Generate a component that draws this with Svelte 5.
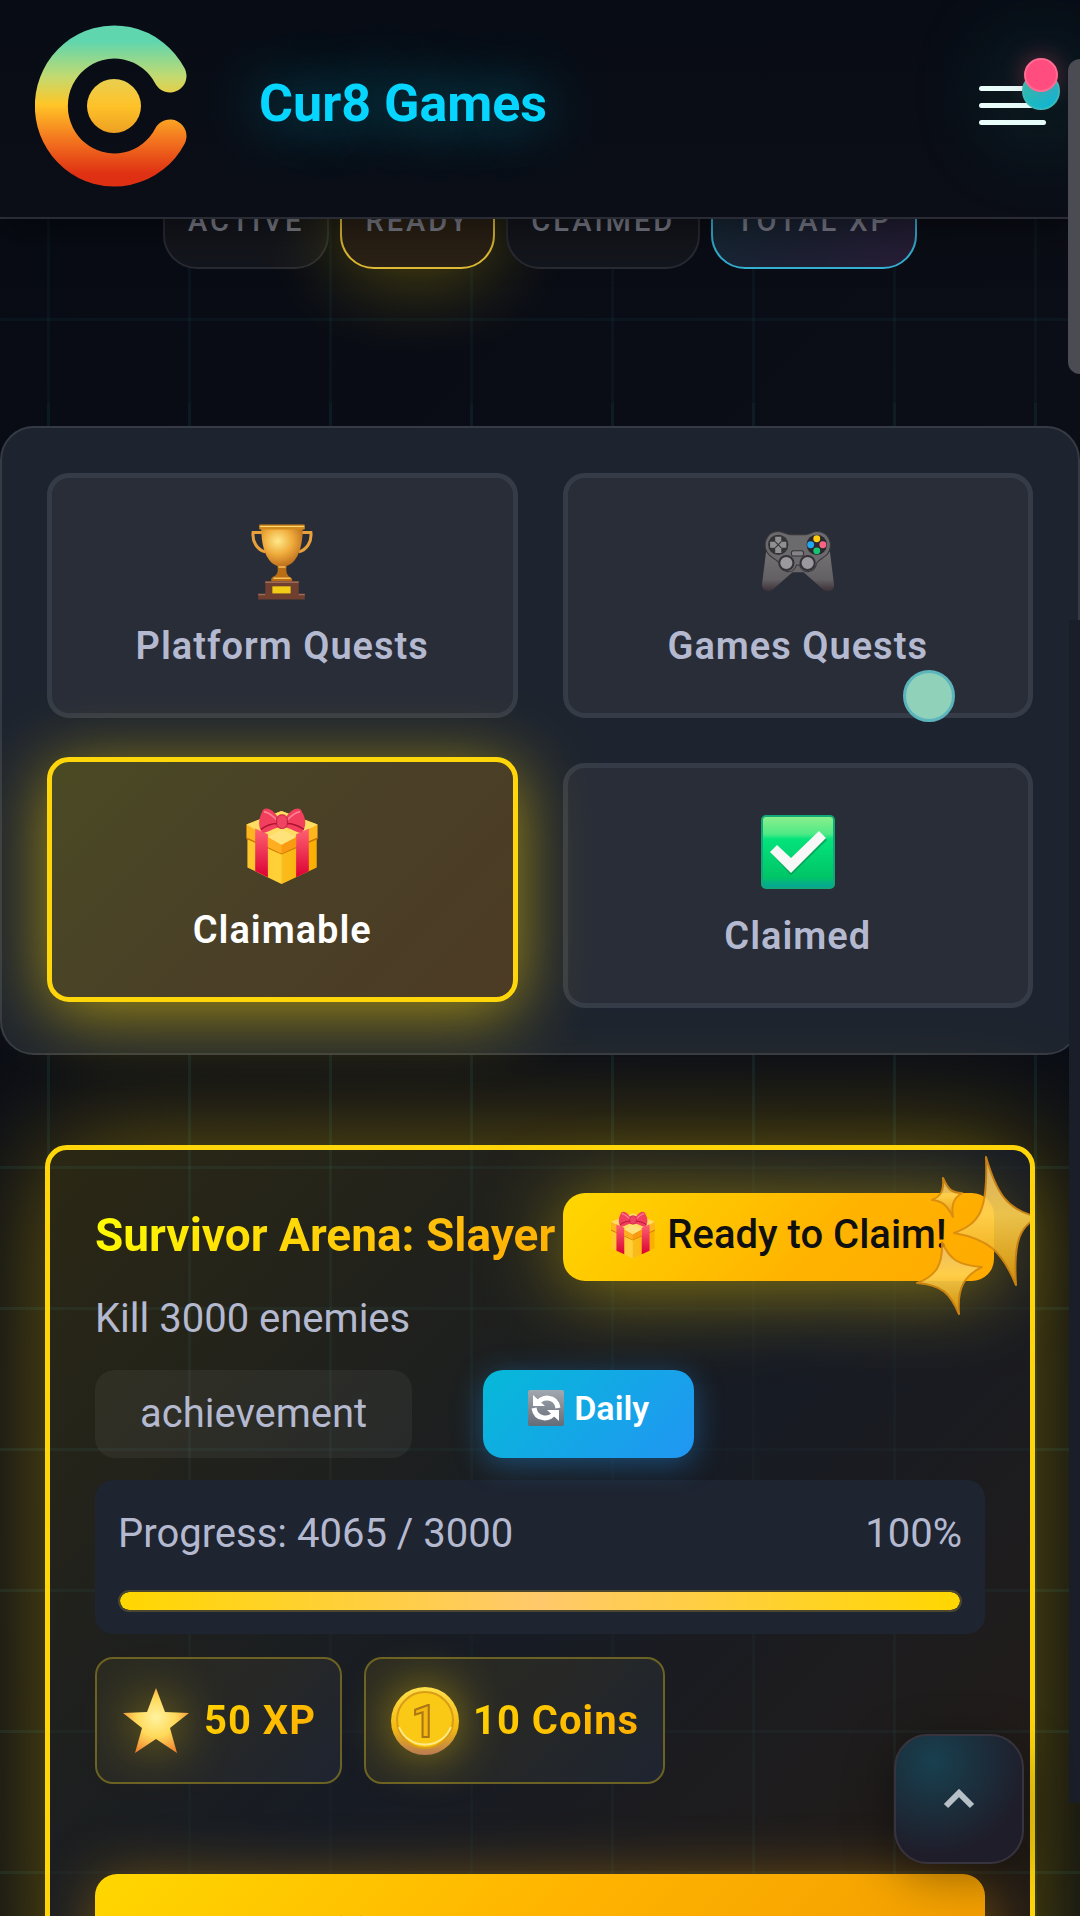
<script lang="ts">
    type Tab = { id: string; label: string };

    const stats = [
        { label: 'Active', kind: 'plain' },
        { label: 'Ready', kind: 'ready' },
        { label: 'Claimed', kind: 'plain' },
        { label: 'Total XP', kind: 'xp' }
    ];

    const tabs: Tab[] = [
        { id: 'platform', label: 'Platform Quests' },
        { id: 'games', label: 'Games Quests' },
        { id: 'claimable', label: 'Claimable' },
        { id: 'claimed', label: 'Claimed' }
    ];

    const quest = {
        title: 'Survivor Arena: Slayer',
        description: 'Kill 3000 enemies',
        category: 'achievement',
        progress: 4065,
        target: 3000,
        xp: 50,
        coins: 10
    };

    let activeTab = $state('claimable');
    let percent = $derived(Math.min(100, Math.round((quest.progress / quest.target) * 100)));
</script>

{#snippet gift()}
    <svg class="gift" viewBox="0 0 73 78" aria-hidden="true">
        <path d="M1 29 L36 46 L72 29 V61 L36 78 L1 61Z" fill="url(#gold-side)" />
        <path d="M36 40 L72 27 V61 L36 78Z" fill="#f5a800" opacity="0.5" />
        <path d="M0 17 L36 3 L73 17 V31 L36 47 L0 31Z" fill="#ffb51c" />
        <path d="M0 17 L36 3 L73 17 L36 37Z" fill="#ffdc63" />
        <path d="M0 31 L36 47 L73 31" fill="none" stroke="#c97800" stroke-width="1.5" />
        <path d="M9 21 L22 27 V71 L9 65Z M64 21 L51 27 V71 L64 65Z" fill="url(#ribbon)" />
        <path d="M22 30 L36 22 L51 30 L36 38Z" fill="#ffe27a" />
        <path d="M22 30 L36 38 V47 L22 40Z" fill="#ffae22" />
        <path d="M51 30 L36 38 V47 L51 40Z" fill="#f99a12" />
        <path d="M32 9 C26 0 18 -2 16 4 C12 12 12 20 16 25 C20 27 26 21 33 20Z" fill="#f23f5d" />
        <path d="M41 9 C47 0 55 -2 57 4 C62 12 61 20 57 25 C53 27 47 21 40 20Z" fill="#f23f5d" />
        <path d="M18 4 C22 4 27 8 32 13 M55 4 C51 4 46 8 41 13" fill="none" stroke="#ff8094" stroke-width="2" />
        <path d="M15 22 C20 18 26 16 32 16 M59 22 C53 18 47 16 41 16" fill="none" stroke="#ad1234" stroke-width="1.5" />
        <rect x="31" y="7" width="11" height="14" rx="5" fill="#ef4563" stroke="#b91c3f" />
    </svg>
{/snippet}

{#snippet tabIcon(id: string)}
    {#if id === 'platform'}
        <svg viewBox="-6 0 73 74" aria-hidden="true">
            <path d="M12 8 H2 C1 17 6 25 14 27 M49 8 H59 C60 17 55 25 47 27" fill="none" stroke="#e9a13b" stroke-width="3" />
            <path d="M10 3 H51 C51 24 45 38 35 41 H26 C16 38 10 24 10 3Z" fill="url(#cup)" />
            <rect x="8" y="0" width="45" height="5" rx="1" fill="#d18a1d" />
            <path d="M9 2 H52" stroke="#ffd772" stroke-width="1" />
            <path d="M26 41 H35 C34 48 36 51 40 53 C42 56 39 57 36 57 H24 C19 57 19 54 21 52 C26 50 27 47 26 41Z" fill="#b96d15" />
            <path d="M27 42 H34 M22 53 H39" stroke="#f9c057" stroke-width="1.5" />
            <path d="M14 56 H47 V69 H53 V74 H7 V69 H14Z" fill="#6f3f30" />
            <path d="M14 57 H47 M7 69 H14 M47 69 H53" stroke="#a16a52" stroke-width="1.5" />
            <rect x="21" y="61" width="18" height="7" fill="#f2cc16" />
        </svg>
    {:else if id === 'games'}
        <svg viewBox="0 -7 73 74" aria-hidden="true">
            <path d="M5 20 L1 52 C1 58 7 61 12 57 L31 40 H42 L61 57 C66 61 73 58 72 52 L68 20Z" fill="url(#pad-grip)" />
            <path d="M17 0 C22 0 25 3 29 3 H44 C48 3 51 0 55 0 C68 0 72 14 65 23 C60 27 58 27 55 31 C53 42 40 42 38 33 H35 C32 42 20 42 18 31 C15 27 12 27 8 23 C0 14 5 0 17 0Z" fill="#6b6a6c" stroke="#38373b" />
            <circle cx="17" cy="13" r="10" fill="#343338" />
            <path d="M14 5 H20 V10 H25 V16 H20 V21 H14 V16 H9 V10 H14Z" fill="#909092" />
            <path d="M14 10 L20 16 M20 10 L14 16" stroke="#343338" />
            <circle cx="55" cy="13" r="10" fill="#29282d" />
            <circle cx="55" cy="7" r="3.4" fill="#ffcc12" />
            <circle cx="49" cy="13" r="3.4" fill="#20a7ef" />
            <circle cx="61" cy="13" r="3.4" fill="#fa6483" />
            <circle cx="55" cy="19" r="3.4" fill="#15c574" />
            <rect x="30" y="19" width="12" height="5" rx="2" fill="#858386" stroke="#343338" />
            <circle cx="25" cy="31" r="7" fill="#9b989e" stroke="#343238" stroke-width="2" />
            <circle cx="46" cy="31" r="7" fill="#9b989e" stroke="#343238" stroke-width="2" />
        </svg>
    {:else if id === 'claimable'}
        {@render gift()}
    {:else}
        <svg viewBox="0 0 74 74" aria-hidden="true">
            <rect x="1" y="1" width="72" height="72" rx="4" fill="url(#check-bg)" stroke="#11a978" stroke-width="2" />
            <path d="M10 38 L16 31 L30 44 L58 17 L66 25 L30 60Z" fill="#08733e" opacity="0.5" />
            <path d="M9 37 L16 30 L30 43 L58 16 L65 23 L30 58Z" fill="#f7f7f7" />
        </svg>
    {/if}
{/snippet}

<svg class="defs" width="0" height="0" aria-hidden="true">
    <defs>
        <linearGradient id="logo-fill" x1="0" y1="0" x2="0" y2="162" gradientUnits="userSpaceOnUse">
            <stop offset="0.1" stop-color="#5fd6ae" />
            <stop offset="0.32" stop-color="#c3da70" />
            <stop offset="0.49" stop-color="#ffc627" />
            <stop offset="0.7" stop-color="#f4781f" />
            <stop offset="0.92" stop-color="#df3013" />
        </linearGradient>
        <linearGradient id="logo-dot" x1="0" y1="0" x2="0" y2="1">
            <stop offset="0" stop-color="#e8cf50" />
            <stop offset="0.5" stop-color="#ffc229" />
            <stop offset="1" stop-color="#eda022" />
        </linearGradient>
        <linearGradient id="gold-side">
            <stop offset="0" stop-color="#ffc62a" />
            <stop offset="0.5" stop-color="#ffd23a" />
            <stop offset="1" stop-color="#ffb500" />
        </linearGradient>
        <linearGradient id="ribbon" x1="0" y1="0" x2="0" y2="1">
            <stop offset="0" stop-color="#ff6372" />
            <stop offset="1" stop-color="#db0034" />
        </linearGradient>
        <radialGradient id="cup" cx="0.4" cy="0.35" r="0.7">
            <stop offset="0" stop-color="#ffe98a" />
            <stop offset="0.5" stop-color="#efab3b" />
            <stop offset="1" stop-color="#b9691a" />
        </radialGradient>
        <linearGradient id="pad-grip" x1="0" y1="0" x2="0" y2="1">
            <stop offset="0" stop-color="#737174" />
            <stop offset="0.7" stop-color="#636064" />
            <stop offset="1" stop-color="#3c3137" />
        </linearGradient>
        <linearGradient id="check-bg" x1="0" y1="0" x2="0" y2="1">
            <stop offset="0" stop-color="#8cf08d" />
            <stop offset="0.25" stop-color="#4fea86" />
            <stop offset="0.32" stop-color="#04e37c" />
            <stop offset="0.85" stop-color="#00c566" />
            <stop offset="1" stop-color="#07a29d" />
        </linearGradient>
        <radialGradient id="star-fill" cx="0.5" cy="0.45" r="0.6">
            <stop offset="0" stop-color="#fff3a0" />
            <stop offset="0.5" stop-color="#ffd95a" />
            <stop offset="1" stop-color="#f2812e" />
        </radialGradient>
        <linearGradient id="coin-fill" x1="0" y1="0" x2="0" y2="1">
            <stop offset="0" stop-color="#ffe04a" />
            <stop offset="0.6" stop-color="#f5bb10" />
            <stop offset="1" stop-color="#b97a52" />
        </linearGradient>
        <linearGradient id="spark-fill" x1="0" y1="0" x2="0" y2="1">
            <stop offset="0" stop-color="#e9bd70" />
            <stop offset="0.45" stop-color="#ffd250" />
            <stop offset="1" stop-color="#e59c06" />
        </linearGradient>
        <linearGradient id="sync-bg" x1="0" y1="0" x2="0" y2="1">
            <stop offset="0" stop-color="#a3a8b0" />
            <stop offset="1" stop-color="#646c78" />
        </linearGradient>
    </defs>
</svg>

<div class="page">
    <header class="topbar">
        <svg class="logo" viewBox="0 0 152 162" role="img" aria-label="Cur8 logo">
            <path d="M135 51 A63 64 0 1 0 135 111" fill="none" stroke="url(#logo-fill)" stroke-width="33" stroke-linecap="round" />
            <circle cx="79" cy="81" r="27" fill="url(#logo-dot)" />
        </svg>
        <h1>Cur8 Games</h1>
        <button class="menu-btn" aria-label="Open menu">
            <span class="bar"></span>
            <span class="bar"></span>
            <span class="bar"></span>
            <span class="dot dot-online"></span>
            <span class="dot dot-alert"></span>
        </button>
    </header>

    <section class="hero">
        <ul class="stats">
            {#each stats as stat}
                <li class="stat {stat.kind}">{stat.label}</li>
            {/each}
        </ul>
    </section>

    <main>
        <nav class="tabs" aria-label="Quest filters">
            {#each tabs as tab}
                <button class="tab" class:active={activeTab === tab.id} onclick={() => (activeTab = tab.id)}>
                    <span class="tab-icon">{@render tabIcon(tab.id)}</span>
                    <span>{tab.label}</span>
                </button>
            {/each}
        </nav>

        <article class="quest">
            <div class="quest-head">
                <h2>{quest.title}</h2>
                <span class="ready-badge">{@render gift()} Ready to Claim!</span>
            </div>
            <p class="description">{quest.description}</p>

            <div class="tags">
                <span class="tag">{quest.category}</span>
                <span class="tag daily">
                    <svg viewBox="0 0 36 36" aria-hidden="true">
                        <rect width="36" height="36" rx="2" fill="url(#sync-bg)" />
                        <path d="M9 14 C13 6 28 5 30 18 M27 22 C23 30 8 31 6 18" fill="none" stroke="#fff" stroke-width="5" />
                        <path d="M5 5 V16 H17Z M31 31 V20 H19Z" fill="#fff" />
                    </svg>
                    Daily
                </span>
            </div>

            <div class="progress">
                <div class="progress-text">
                    <span>Progress: {quest.progress} / {quest.target}</span>
                    <span>{percent}%</span>
                </div>
                <div class="track" role="progressbar" aria-label="Quest progress" aria-valuenow={percent} aria-valuemin="0" aria-valuemax="100">
                    <div class="fill" style:width="{percent}%"></div>
                </div>
            </div>

            <div class="rewards">
                <div class="reward">
                    <svg viewBox="0 0 68 68" aria-hidden="true">
                        <path d="M34 1 L43 25 L67 26 L48 41 L55 66 L34 52 L13 66 L20 41 L1 26 L25 25Z" fill="url(#star-fill)" />
                    </svg>
                    <strong>{quest.xp} XP</strong>
                </div>
                <div class="reward">
                    <svg viewBox="0 0 68 68" aria-hidden="true">
                        <circle cx="34" cy="34" r="34" fill="url(#coin-fill)" />
                        <circle cx="34" cy="33" r="28" fill="#f9c915" stroke="#d99d16" stroke-width="2" />
                        <path d="M8 40 A28 28 0 0 0 60 40" fill="none" stroke="#ffe98a" stroke-width="2" />
                        <text x="33" y="50" text-anchor="middle" class="coin-digit">1</text>
                    </svg>
                    <strong>{quest.coins} Coins</strong>
                </div>
            </div>

            <button class="claim-btn">{@render gift()} Claim Your Reward</button>

            <svg class="sparkles" viewBox="0 0 116 160" aria-hidden="true">
                <g fill="url(#spark-fill)" stroke="#d88b12" stroke-width="2" stroke-linejoin="round">
                    <path d="M72 2 C82 36 92 56 125 62 C107 70 99 84 102 130 C88 96 74 84 40 78 C66 68 74 56 72 2Z" />
                    <path d="M29 23 C34 34 37 38 48 38 C40 43 37 49 39 62 C33 50 28 46 18 45 C27 41 30 36 29 23Z" />
                    <path d="M28 87 C36 105 44 110 68 112 C50 121 43 133 45 159 C36 138 28 130 3 128 C22 121 29 110 28 87Z" />
                </g>
            </svg>
        </article>
    </main>

    <span class="scroll-rail"></span>
    <span class="scroll-thumb"></span>
    <span class="cursor-dot"></span>

    <button class="to-top" aria-label="Back to top">
        <svg viewBox="0 0 32 20" aria-hidden="true">
            <path d="M3 17 L16 4 L29 17" fill="none" stroke="#b7bfc7" stroke-width="6" />
        </svg>
    </button>
</div>

<style>
    :global(body) {
        background: #080c14;
    }

    .defs {
        position: absolute;
    }

    .page {
        position: relative;
        height: 100vh;
        overflow: hidden;
        background: linear-gradient(135deg, #070b14, #0c0e17 50%, #070b13);
        color: #b4b9d0;
        font-family: Roboto, 'Liberation Sans', sans-serif;
        font-size: 40px;
    }

    svg {
        display: block;
        flex-shrink: 0;
    }

    button {
        font-family: inherit;
        cursor: pointer;
    }

    /* Header */
    .topbar {
        position: relative;
        z-index: 10;
        display: flex;
        align-items: center;
        padding: 25px 34px 30px 35px;
        background: linear-gradient(180deg, #080c15, #0b0e17);
        border-bottom: 2px solid #292c34;
        box-shadow: 0 8px 40px rgba(0, 0, 0, 0.5);
    }

    .logo {
        width: 152px;
        height: 162px;
    }

    h1 {
        margin: 0 0 0 72px;
        font-size: 52px;
        font-weight: 700;
        line-height: 60px;
        padding-bottom: 4px;
        color: #06d6ff;
        text-shadow: 0 0 60px rgba(6, 214, 255, 0.6);
    }

    .menu-btn {
        position: relative;
        display: flex;
        flex-direction: column;
        gap: 12px;
        width: 67px;
        padding: 0 0 2px;
        margin-left: auto;
        border: none;
        background: none;
    }

    .bar {
        height: 5px;
        border-radius: 3px;
        background: #f2fffd;
    }

    .dot {
        position: absolute;
        box-sizing: border-box;
        border-radius: 50%;
    }

    .dot-online {
        top: -14px;
        right: -14px;
        width: 38px;
        height: 38px;
        border: 2px solid #35bdbc;
        background: linear-gradient(135deg, #1fc7a8, #08b6dd);
        box-shadow: 0 0 100px 10px rgba(30, 200, 160, 0.4);
    }

    .dot-alert {
        top: -28px;
        right: -12px;
        width: 34px;
        height: 34px;
        border: 2px solid #ff6b91;
        background: #ff4d7f;
        box-shadow: 0 0 24px rgba(255, 77, 127, 0.4);
    }

    /* Stats */
    .hero {
        padding-bottom: 134px;
        background-image:
            linear-gradient(90deg, rgba(40, 180, 170, 0.05) 3px, transparent 3px),
            linear-gradient(rgba(40, 180, 170, 0.05) 3px, transparent 3px);
        background-size: 141px 141px;
        background-position: 47px 99px;
    }

    .stats {
        display: flex;
        justify-content: center;
        gap: 11px;
        margin: 0;
        padding: 0;
        list-style: none;
    }

    .stat {
        box-sizing: border-box;
        height: 120px;
        margin-top: -70px;
        padding: 52px 23px 0;
        border: 2px solid #292b32;
        border-radius: 34px;
        background: #14161d;
        color: #7c7e8b;
        font-size: 29px;
        font-weight: 500;
        line-height: 36px;
        letter-spacing: 3px;
        text-transform: uppercase;
    }

    .stat.ready {
        border-color: #e2bd35;
        background: #2b2115;
        box-shadow: 0 10px 80px rgba(255, 215, 0, 0.3);
    }

    .stat.xp {
        border-color: #35b1d4;
        background: linear-gradient(135deg, #122c38, #1c2133 55%, #281d37);
    }

    main {
        padding-top: 23px;
        background-image:
            linear-gradient(90deg, rgba(50, 200, 200, 0.08) 3px, transparent 3px),
            linear-gradient(rgba(50, 200, 200, 0.08) 3px, transparent 3px);
        background-size: 141px 141px;
        background-position: 47px 58px;
    }

    /* Filter tabs */
    .tabs {
        display: grid;
        grid-template-columns: 1fr 1fr;
        gap: 45px;
        padding: 45px;
        border: 2px solid #353a43;
        border-radius: 34px;
        background: #1e242f;
    }

    .tab {
        display: flex;
        flex-direction: column;
        align-items: center;
        gap: 22px;
        padding: 46px 10px 43px;
        border: 5px solid #363c47;
        border-radius: 22px;
        background: #282d38;
        color: #b4b9d0;
        font-size: 38px;
        font-weight: 600;
        line-height: 48px;
        letter-spacing: 1px;
    }

    .tab.active {
        border-color: #ffd60a;
        background: linear-gradient(135deg, #4a4a24, #4a4027 50%, #4d3b24);
        color: #fff;
        box-shadow: 0 12px 70px rgba(255, 215, 0, 0.6);
        transform: translateY(-6px);
    }

    .tab-icon svg {
        width: 74px;
        height: 76px;
    }

    /* Quest card */
    .quest {
        position: relative;
        margin: 90px 45px 0;
        padding: 43px 45px 60px;
        border: 5px solid #ffd60a;
        border-radius: 22px;
        background: linear-gradient(135deg, rgba(255, 215, 0, 0.13), rgba(26, 31, 40, 0.8) 50%, rgba(255, 150, 20, 0.12));
        box-shadow: 0 0 120px rgba(255, 215, 0, 0.4);
    }

    .quest-head {
        display: flex;
        align-items: center;
        gap: 8px;
        margin-right: -9px;
    }

    h2 {
        margin: 0;
        padding-bottom: 4px;
        font-size: 46px;
        font-weight: 700;
        line-height: 60px;
        white-space: nowrap;
        background: linear-gradient(135deg, #ffff00, #ffbe0b 70%, #ffaa00);
        background-clip: text;
        -webkit-background-clip: text;
        color: transparent;
    }

    .ready-badge {
        display: flex;
        flex: 1;
        align-items: center;
        gap: 12px;
        padding: 18px 45px 22px 48px;
        border-radius: 22px;
        background: linear-gradient(135deg, #ffd700, #ffb300 60%, #ffaa00);
        box-shadow: 0 8px 80px rgba(255, 215, 0, 0.5);
        color: #101010;
        font-size: 40px;
        font-weight: 500;
        line-height: 48px;
        white-space: nowrap;
    }

    .ready-badge .gift,
    .claim-btn .gift {
        width: 44px;
        height: 48px;
    }

    .description {
        margin: 13px 0 26px;
        line-height: 50px;
    }

    .tags {
        display: flex;
        gap: 71px;
    }

    .tag {
        padding: 20px 45px;
        border-radius: 20px;
        background: rgba(255, 255, 255, 0.05);
        line-height: 48px;
    }

    .daily {
        display: flex;
        align-items: center;
        gap: 10px;
        padding: 14px 45px 26px;
        background: linear-gradient(135deg, #06b9d8, #2196f3);
        box-shadow: 0 6px 30px rgba(33, 150, 243, 0.4);
        color: #fff;
        font-size: 34px;
        font-weight: 600;
    }

    .daily svg {
        width: 36px;
        height: 36px;
    }

    .progress {
        margin-top: 22px;
        padding: 24px 23px 22px;
        border-radius: 18px;
        background: #1e2430;
    }

    .progress-text {
        display: flex;
        justify-content: space-between;
        line-height: 60px;
    }

    .track {
        box-sizing: border-box;
        height: 22px;
        margin-top: 26px;
        border: 2px solid #4a4630;
        border-radius: 11px;
        overflow: hidden;
    }

    .fill {
        height: 100%;
        border-radius: 11px;
        background: linear-gradient(90deg, #ffd700, #ffc96b 50%, #ffd700);
    }

    .rewards {
        display: flex;
        gap: 22px;
        margin-top: 23px;
    }

    .reward {
        display: flex;
        align-items: center;
        gap: 14px;
        padding: 27px 24px 27px 25px;
        border: 2px solid #6c6223;
        border-radius: 18px;
        background: linear-gradient(135deg, #2b2b21, #272826 50%, #1e2431);
    }

    .reward svg {
        width: 68px;
        height: 68px;
        filter: drop-shadow(0 0 24px rgba(255, 215, 0, 0.5));
    }

    .coin-digit {
        font-size: 44px;
        font-weight: 700;
        fill: #f3b712;
        stroke: #aa7515;
        stroke-width: 2px;
    }

    .reward strong {
        font-weight: 700;
        line-height: 69px;
        letter-spacing: 1px;
        background: linear-gradient(135deg, #ffd700, #ffaa00);
        background-clip: text;
        -webkit-background-clip: text;
        color: transparent;
    }

    .claim-btn {
        display: flex;
        align-items: center;
        justify-content: center;
        gap: 12px;
        width: 100%;
        margin-top: 90px;
        padding: 41px 45px;
        border: none;
        border-radius: 22px;
        background: linear-gradient(135deg, #ffd700, #ffb300 50%, #f09a00);
        box-shadow: 0 6px 60px rgba(255, 170, 0, 0.4);
        color: #101010;
        font-size: 43px;
        font-weight: 700;
        line-height: 48px;
    }

    .sparkles {
        position: absolute;
        top: 5px;
        right: 0;
        width: 116px;
        height: 160px;
        opacity: 0.9;
    }

    /* Floating layers */
    .scroll-rail {
        position: absolute;
        top: 620px;
        right: 0;
        bottom: 113px;
        width: 11px;
        background: #1a1e28;
    }

    .scroll-thumb {
        position: absolute;
        z-index: 20;
        top: 59px;
        right: -12px;
        width: 24px;
        height: 315px;
        border-radius: 12px;
        background: #4b4b54;
    }

    .cursor-dot {
        position: absolute;
        top: 670px;
        left: 903px;
        box-sizing: border-box;
        width: 52px;
        height: 52px;
        border: 3px solid #5cb5bd;
        border-radius: 50%;
        background: #8fd1b9;
    }

    .to-top {
        position: fixed;
        right: 56px;
        bottom: 52px;
        display: flex;
        align-items: center;
        justify-content: center;
        width: 130px;
        height: 130px;
        border: 2px solid #38343f;
        border-radius: 34px;
        background: radial-gradient(circle at 30% 20%, #18404f, #1f1d2a 70%);
        box-shadow: 0 12px 50px rgba(0, 0, 0, 0.4);
    }

    .to-top svg {
        width: 32px;
        height: 20px;
    }
</style>
